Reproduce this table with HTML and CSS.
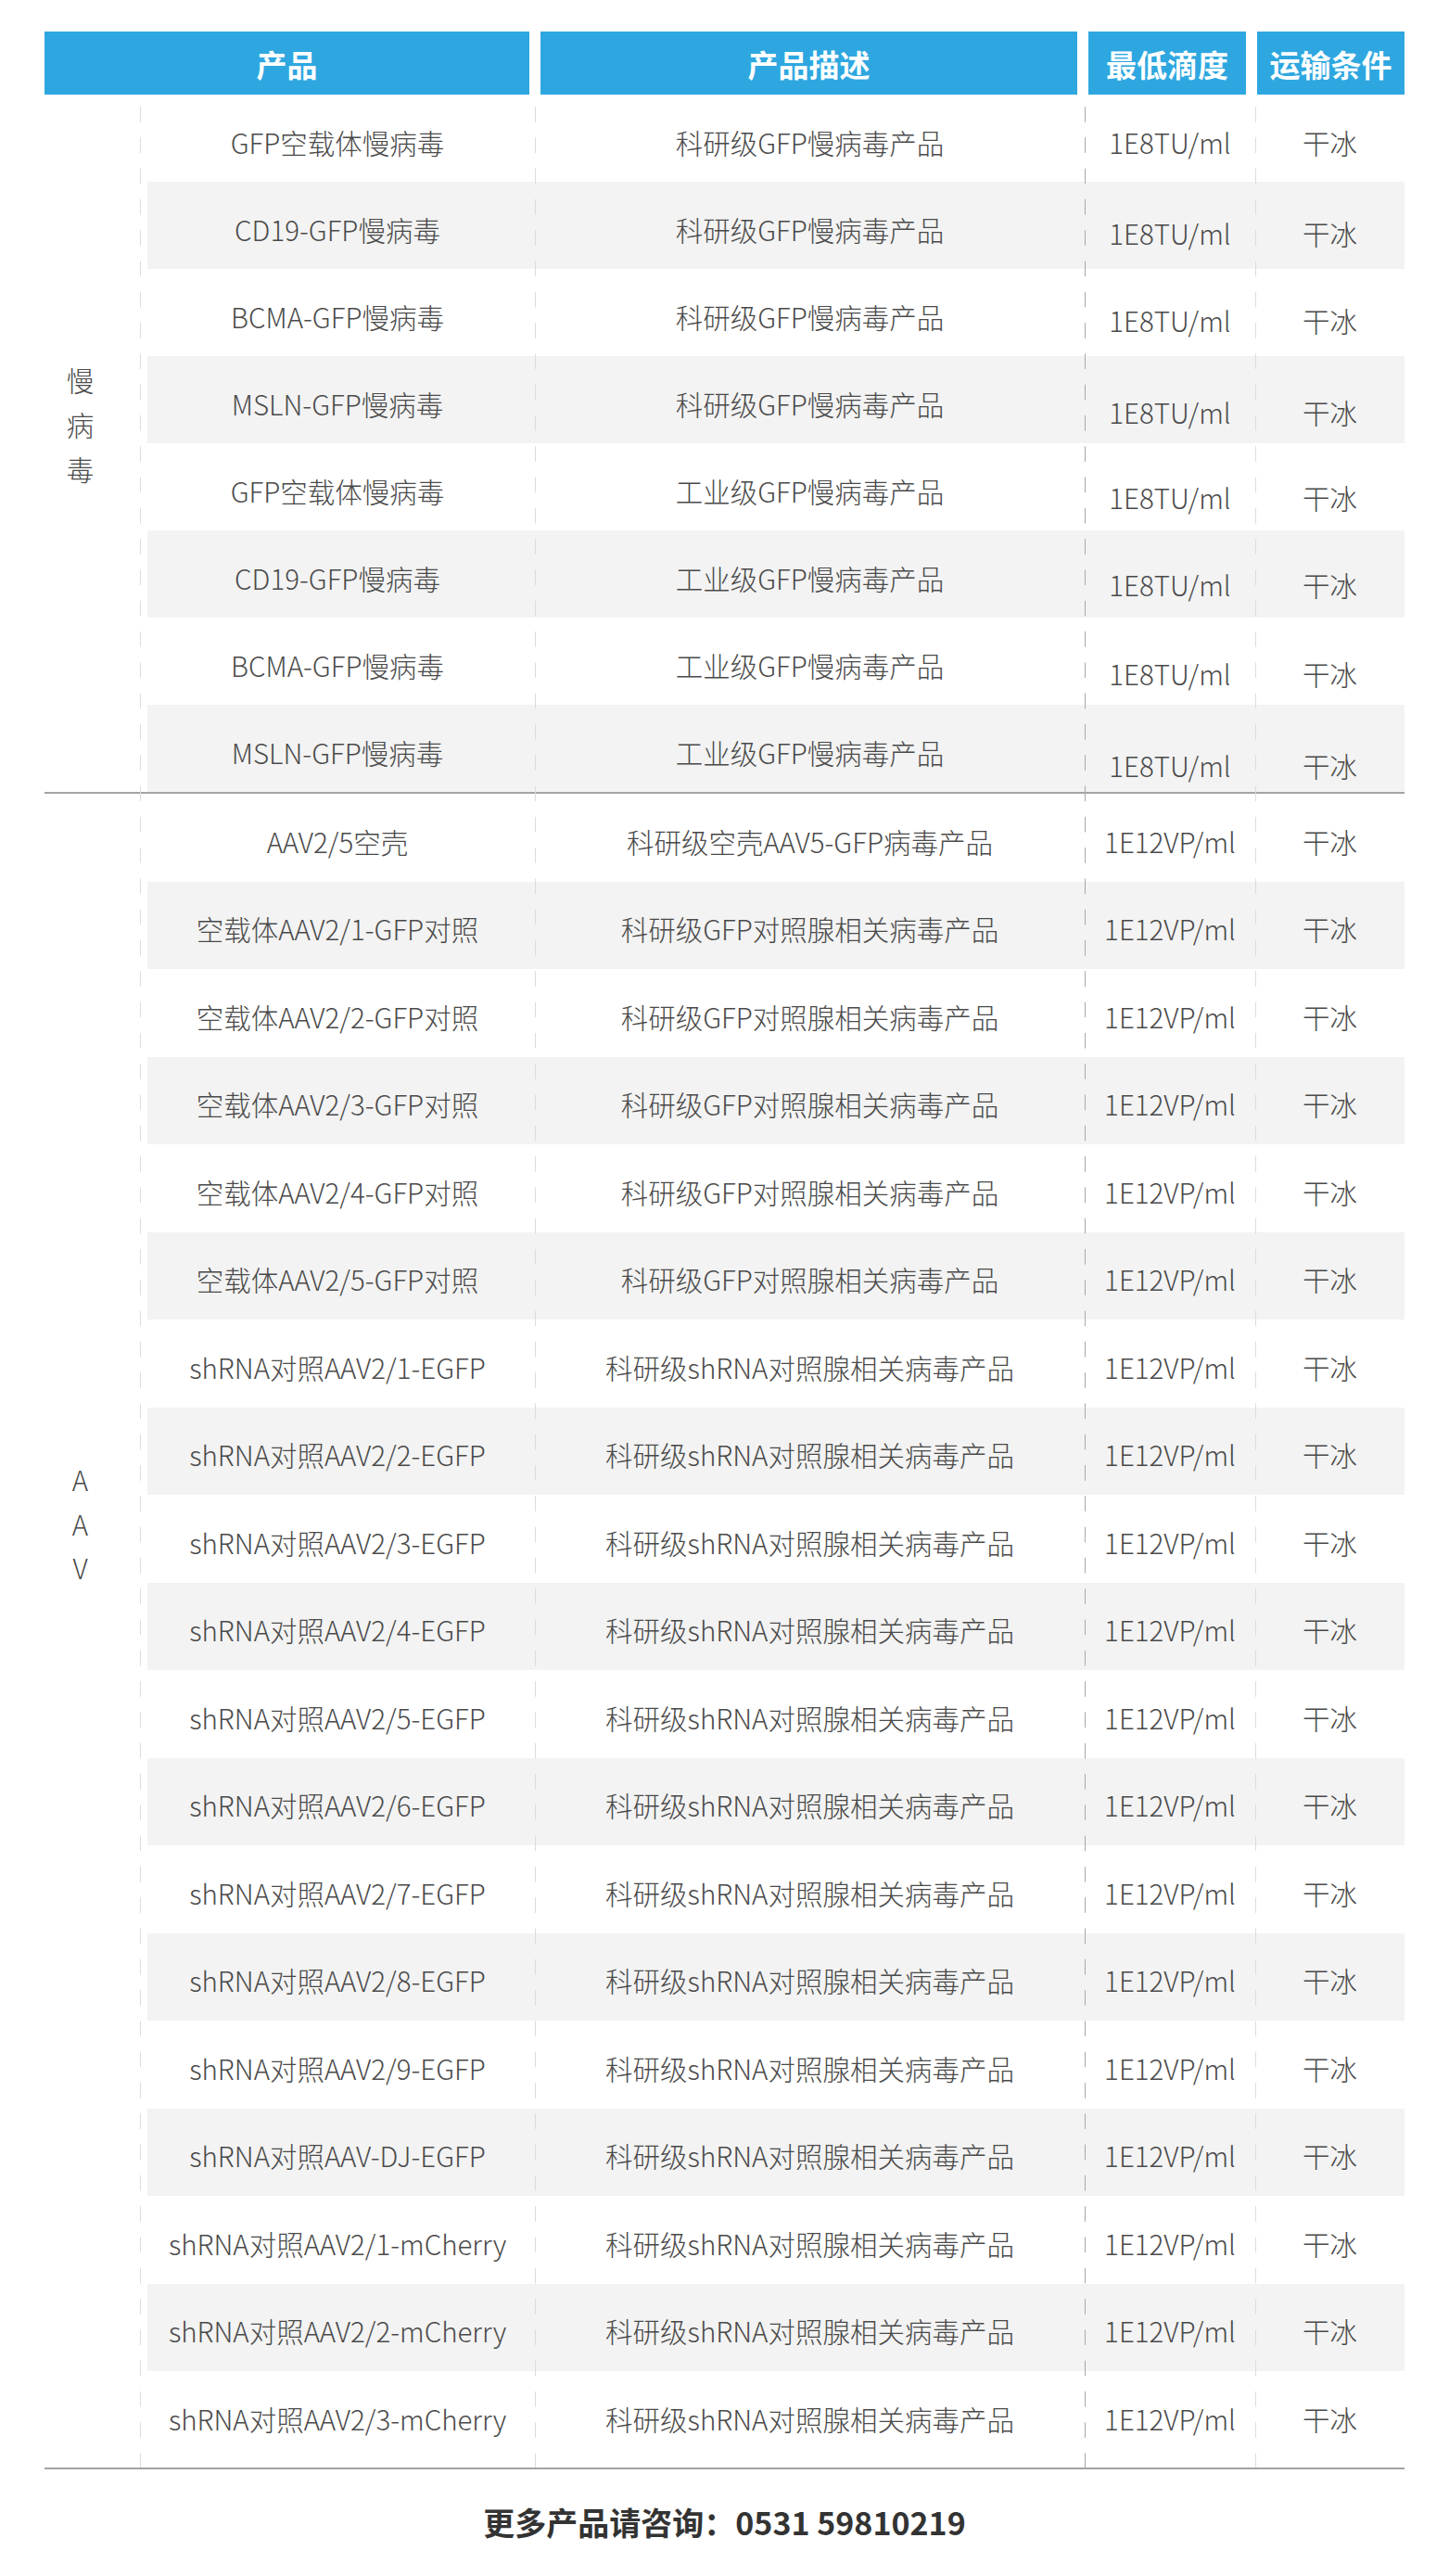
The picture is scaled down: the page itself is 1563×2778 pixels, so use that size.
FILE: index.html
```html
<!DOCTYPE html>
<html lang="zh-CN">
<head>
<meta charset="utf-8">
<title>产品列表</title>
<link rel="stylesheet" href="styles.css">
</head>
<body>
<div class="page">
  <div class="thead">
    <div class="th">产品</div>
    <div class="th">产品描述</div>
    <div class="th">最低滴度</div>
    <div class="th">运输条件</div>
  </div>

  <div class="tbody">
    <div class="group group-lenti">
      <div class="label label-lenti"><span>慢</span><span>病</span><span>毒</span></div>
      <div class="rows">
        <div class="row"><div class="c">GFP空载体慢病毒</div><div class="c">科研级GFP慢病毒产品</div><div class="c t">1E8TU/ml</div><div class="c t">干冰</div></div>
        <div class="row alt off4"><div class="c">CD19-GFP慢病毒</div><div class="c">科研级GFP慢病毒产品</div><div class="c t">1E8TU/ml</div><div class="c t">干冰</div></div>
        <div class="row off4"><div class="c">BCMA-GFP慢病毒</div><div class="c">科研级GFP慢病毒产品</div><div class="c t">1E8TU/ml</div><div class="c t">干冰</div></div>
        <div class="row alt off9"><div class="c">MSLN-GFP慢病毒</div><div class="c">科研级GFP慢病毒产品</div><div class="c t">1E8TU/ml</div><div class="c t">干冰</div></div>
        <div class="row off7"><div class="c">GFP空载体慢病毒</div><div class="c">工业级GFP慢病毒产品</div><div class="c t">1E8TU/ml</div><div class="c t">干冰</div></div>
        <div class="row alt off7"><div class="c">CD19-GFP慢病毒</div><div class="c">工业级GFP慢病毒产品</div><div class="c t">1E8TU/ml</div><div class="c t">干冰</div></div>
        <div class="row off9"><div class="c">BCMA-GFP慢病毒</div><div class="c">工业级GFP慢病毒产品</div><div class="c t">1E8TU/ml</div><div class="c t">干冰</div></div>
        <div class="row alt off14"><div class="c">MSLN-GFP慢病毒</div><div class="c">工业级GFP慢病毒产品</div><div class="c t">1E8TU/ml</div><div class="c t">干冰</div></div>
      </div>
    </div>

    <div class="group group-aav">
      <div class="label label-aav"><span>A</span><span>A</span><span>V</span></div>
      <div class="rows">
        <div class="row"><div class="c">AAV2/5空壳</div><div class="c">科研级空壳AAV5-GFP病毒产品</div><div class="c">1E12VP/ml</div><div class="c">干冰</div></div>
        <div class="row alt"><div class="c">空载体AAV2/1-GFP对照</div><div class="c">科研级GFP对照腺相关病毒产品</div><div class="c">1E12VP/ml</div><div class="c">干冰</div></div>
        <div class="row"><div class="c">空载体AAV2/2-GFP对照</div><div class="c">科研级GFP对照腺相关病毒产品</div><div class="c">1E12VP/ml</div><div class="c">干冰</div></div>
        <div class="row alt"><div class="c">空载体AAV2/3-GFP对照</div><div class="c">科研级GFP对照腺相关病毒产品</div><div class="c">1E12VP/ml</div><div class="c">干冰</div></div>
        <div class="row"><div class="c">空载体AAV2/4-GFP对照</div><div class="c">科研级GFP对照腺相关病毒产品</div><div class="c">1E12VP/ml</div><div class="c">干冰</div></div>
        <div class="row alt"><div class="c">空载体AAV2/5-GFP对照</div><div class="c">科研级GFP对照腺相关病毒产品</div><div class="c">1E12VP/ml</div><div class="c">干冰</div></div>
        <div class="row"><div class="c">shRNA对照AAV2/1-EGFP</div><div class="c">科研级shRNA对照腺相关病毒产品</div><div class="c">1E12VP/ml</div><div class="c">干冰</div></div>
        <div class="row alt"><div class="c">shRNA对照AAV2/2-EGFP</div><div class="c">科研级shRNA对照腺相关病毒产品</div><div class="c">1E12VP/ml</div><div class="c">干冰</div></div>
        <div class="row"><div class="c">shRNA对照AAV2/3-EGFP</div><div class="c">科研级shRNA对照腺相关病毒产品</div><div class="c">1E12VP/ml</div><div class="c">干冰</div></div>
        <div class="row alt"><div class="c">shRNA对照AAV2/4-EGFP</div><div class="c">科研级shRNA对照腺相关病毒产品</div><div class="c">1E12VP/ml</div><div class="c">干冰</div></div>
        <div class="row"><div class="c">shRNA对照AAV2/5-EGFP</div><div class="c">科研级shRNA对照腺相关病毒产品</div><div class="c">1E12VP/ml</div><div class="c">干冰</div></div>
        <div class="row alt"><div class="c">shRNA对照AAV2/6-EGFP</div><div class="c">科研级shRNA对照腺相关病毒产品</div><div class="c">1E12VP/ml</div><div class="c">干冰</div></div>
        <div class="row"><div class="c">shRNA对照AAV2/7-EGFP</div><div class="c">科研级shRNA对照腺相关病毒产品</div><div class="c">1E12VP/ml</div><div class="c">干冰</div></div>
        <div class="row alt"><div class="c">shRNA对照AAV2/8-EGFP</div><div class="c">科研级shRNA对照腺相关病毒产品</div><div class="c">1E12VP/ml</div><div class="c">干冰</div></div>
        <div class="row"><div class="c">shRNA对照AAV2/9-EGFP</div><div class="c">科研级shRNA对照腺相关病毒产品</div><div class="c">1E12VP/ml</div><div class="c">干冰</div></div>
        <div class="row alt"><div class="c">shRNA对照AAV-DJ-EGFP</div><div class="c">科研级shRNA对照腺相关病毒产品</div><div class="c">1E12VP/ml</div><div class="c">干冰</div></div>
        <div class="row"><div class="c">shRNA对照AAV2/1-mCherry</div><div class="c">科研级shRNA对照腺相关病毒产品</div><div class="c">1E12VP/ml</div><div class="c">干冰</div></div>
        <div class="row alt"><div class="c">shRNA对照AAV2/2-mCherry</div><div class="c">科研级shRNA对照腺相关病毒产品</div><div class="c">1E12VP/ml</div><div class="c">干冰</div></div>
        <div class="row"><div class="c">shRNA对照AAV2/3-mCherry</div><div class="c">科研级shRNA对照腺相关病毒产品</div><div class="c">1E12VP/ml</div><div class="c">干冰</div></div>
      </div>
    </div>
  </div>

  <div class="footer">更多产品请咨询：0531 59810219</div>
</div>
</body>
</html>
```

FILE: styles.css
```css
* { box-sizing: border-box; }

html, body {
  margin: 0;
  padding: 0;
  background: #ffffff;
}

body {
  width: 1563px;
  font-family: "Noto Sans CJK SC", "Noto Sans", sans-serif;
  color: #3c3c3c;
}

.page {
  padding: 34px 48px 0 48px;
}

/* header */
.thead {
  display: grid;
  grid-template-columns: 523px 579px 170px 159px;
  column-gap: 12px;
  height: 68px;
}

.th {
  background: #2ea7e0;
  color: #ffffff;
  font-size: 33px;
  font-weight: 700;
  display: flex;
  align-items: center;
  justify-content: center;
  line-height: 1;
  padding-top: 2px;
}

/* body */
.tbody {
  position: relative;
  padding-bottom: 9px;
  border-bottom: 2px solid #a3a3a3;
}

.tbody::after {
  content: "";
  position: absolute;
  left: 0;
  right: 0;
  top: 13px;
  bottom: 0;
  pointer-events: none;
  background-image:
    linear-gradient(to bottom, #dcdcdc 0, #dcdcdc 17px, transparent 17px),
    linear-gradient(to bottom, #dcdcdc 0, #dcdcdc 17px, transparent 17px),
    linear-gradient(to bottom, #a8a8a8 0, #a8a8a8 17px, transparent 17px),
    linear-gradient(to bottom, #dcdcdc 0, #dcdcdc 17px, transparent 17px);
  background-size: 1px 33.3px;
  background-repeat: repeat-y;
  background-position: 103px 0, 529px 0, 1122px 0, 1306px 0;
}

.group {
  display: grid;
  grid-template-columns: 103px 1364px;
}

.group-aav {
  border-top: 2px solid #a3a3a3;
}

.label {
  display: flex;
  flex-direction: column;
  align-items: center;
  font-family: "Noto Sans CJK SC Light", "Noto Sans CJK SC", "Noto Sans", sans-serif;
  font-size: 29.5px;
  font-weight: 300;
  line-height: 48px;
  color: #4a4a4a;
  padding-right: 26px;
}

.label-lenti { padding-top: 283px; }
.label-aav { padding-top: 716px; line-height: 47.5px; }

.group-lenti .row { height: 94px; }
.group-aav .row { height: 94.5px; }

.row {
  display: grid;
  grid-template-columns: 426px 593px 184px 161px;
  align-items: center;
}

.row.alt {
  background: linear-gradient(to right, transparent 8px, #f3f3f3 8px);
}

.c {
  text-align: center;
  font-family: "Noto Sans CJK SC Light", "Noto Sans CJK SC", "Noto Sans", sans-serif;
  font-size: 29.5px;
  font-weight: 300;
  line-height: 40px;
  padding-top: 7px;
  white-space: nowrap;
  color: #4a4a4a;
}

.off4 .t { padding-top: 15px; }
.off7 .t { padding-top: 21px; }
.off9 .t { padding-top: 25px; }
.off14 .t { padding-top: 35px; }

.footer {
  height: 115px;
  display: flex;
  align-items: center;
  justify-content: center;
  font-size: 34px;
  font-weight: 700;
  color: #333333;
  line-height: 1;
}
```
